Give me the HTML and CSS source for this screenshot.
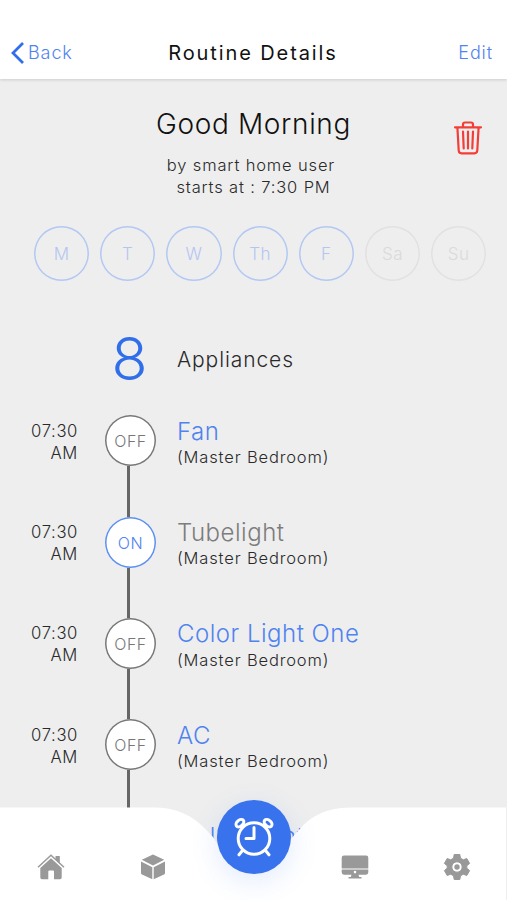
FILE: index.html
```html
<!DOCTYPE html>
<html lang="en">
<head>
  <meta charset="UTF-8" />
  <meta name="viewport" content="width=device-width, initial-scale=1.0"/>
  <title>Routine Details</title>
  <link rel="stylesheet" href="styles.css">
</head>
<body>
  <header>
    <a class="back">
      <svg width="14" height="24" viewBox="0 0 14 24"><path d="M12 2 2 12 12 22"/></svg>
      <span>Back</span>
    </a>
    <h1>Routine Details</h1>
    <a class="edit">Edit</a>
  </header>

  <main>
    <section class="intro">
      <h2>Good Morning</h2>
      <p class="author">by smart home user</p>
      <p class="starts">starts at : 7:30 PM</p>
      <svg class="trash" width="28" height="34" viewBox="0 0 28 34">
        <path d="M1 6.3H27M9 6V3.5Q9 1.5 11 1.5H17Q19 1.5 19 3.5V6M3.4 6.5 4.7 29.5Q4.9 32.3 7.5 32.3H20.5Q23.1 32.3 23.3 29.5L24.6 6.5M9 10.5 9.7 27.5M14 10.5V27.5M19 10.5 18.3 27.5"/>
      </svg>
    </section>

    <div class="days">
      <span class="day">M</span>
      <span class="day">T</span>
      <span class="day">W</span>
      <span class="day">Th</span>
      <span class="day">F</span>
      <span class="day off">Sa</span>
      <span class="day off">Su</span>
    </div>

    <div class="summary">
      <span class="count">8</span>
      <span class="label">Appliances</span>
    </div>

    <ul class="timeline">
      <li>
        <div class="time">07:30<br>AM</div>
        <div class="state">OFF</div>
        <div class="appliance"><h3>Fan</h3><p>(Master Bedroom)</p></div>
      </li>
      <li>
        <div class="time">07:30<br>AM</div>
        <div class="state on">ON</div>
        <div class="appliance"><h3 class="grey">Tubelight</h3><p>(Master Bedroom)</p></div>
      </li>
      <li>
        <div class="time">07:30<br>AM</div>
        <div class="state">OFF</div>
        <div class="appliance"><h3>Color Light One</h3><p>(Master Bedroom)</p></div>
      </li>
      <li>
        <div class="time">07:30<br>AM</div>
        <div class="state">OFF</div>
        <div class="appliance"><h3>AC</h3><p>(Master Bedroom)</p></div>
      </li>
      <li>
        <div class="time">07:30<br>AM</div>
        <div class="state">OFF</div>
        <div class="appliance"><h3>Color Light Two</h3><p>(Master Bedroom)</p></div>
      </li>
    </ul>
  </main>

  <nav>
    <svg class="nav-shape" width="507" height="93" viewBox="0 0 507 93">
      <path d="M0 .5H155C172 .5 187 6 199 16C206 22 209 26 213 30C223 46 236 56 254 56C270 56 281 44 291 32C296 26 302 19 308 14C320 4.5 334 .5 352 .5H506V93H0Z"/>
    </svg>
    <a class="tab">
      <svg width="28" height="26" viewBox="0 0 28 26">
        <path d="M14 4.2 24.7 14V23.5Q24.7 25.3 23 25.3H17V17.5Q17 16.5 16 16.5H12.3Q11.3 16.5 11.3 17.5V25.3H5Q3.3 25.3 3.3 23.5V14Z"/>
        <path d="M18.5 2H22.8V9.5L18.5 5.6Z"/>
        <path class="roof" d="M1 13.2 14 1.3 27 13.2"/>
      </svg>
    </a>
    <a class="tab">
      <svg width="26" height="26" viewBox="0 0 26 26">
        <path d="M13 .5 24.2 5.8 13 11.6 1.8 5.8ZM1 7.6 12.3 13.2V25.3L2 20.6Q1 20 1 19ZM25 7.6 13.7 13.2V25.3L24 20.6Q25 20 25 19Z"/>
      </svg>
    </a>
    <a class="tab alarm">
      <svg width="42" height="40" viewBox="0 0 42 40">
        <circle cx="21" cy="21.5" r="15.8"/>
        <path d="M21 10.5V21.5H13M9.5 33.5 6 37.8M32.5 33.5 36 37.8"/>
        <ellipse cx="6.9" cy="6.2" rx="4.5" ry="3" transform="rotate(-40 6.9 6.2)"/>
        <ellipse cx="35.1" cy="6.2" rx="4.5" ry="3" transform="rotate(40 35.1 6.2)"/>
      </svg>
    </a>
    <a class="tab">
      <svg width="28" height="26" viewBox="0 0 28 26">
        <path d="M3 1.5H25Q27.3 1.5 27.3 3.8V14.4H.7V3.8Q.7 1.5 3 1.5Z"/>
        <path fill-rule="evenodd" d="M.7 15.6H27.3V18.3Q27.3 20.7 25 20.7H17.5L18.2 23H20.5V24.4H7.5V23H9.8L10.5 20.7H3Q.7 20.7 .7 18.3ZM14 16.8A1.3 1.3 0 1 0 14 19.4A1.3 1.3 0 1 0 14 16.8Z"/>
      </svg>
    </a>
    <a class="tab">
      <svg width="28" height="28" viewBox="0 0 28 28">
        <path class="gear" fill-rule="evenodd" d="M11.2 1.5H16.8L17.5 5.2 20.3 6.8 23.8 5.5 26.6 10.4 23.8 12.8V15.2L26.6 17.6 23.8 22.5 20.3 21.2 17.5 22.8 16.8 26.5H11.2L10.5 22.8 7.7 21.2 4.2 22.5 1.4 17.6 4.2 15.2V12.8L1.4 10.4 4.2 5.5 7.7 6.8 10.5 5.2ZM14 8.8A5.2 5.2 0 1 0 14 19.2A5.2 5.2 0 1 0 14 8.8Z"/>
        <circle cx="14" cy="14" r="2.7"/>
      </svg>
    </a>
  </nav>
</body>
</html>
```
FILE: styles.css
```css
* {
  box-sizing: border-box;
}
body {
  margin: 0;
  height: 900px;
  overflow: hidden;
  position: relative;
  background: #eeeeee;
  font-family: Inter, "Liberation Sans", sans-serif;
  font-weight: 300;
  color: #2a2a2a;
}
h1, h2, h3, p, ul {
  margin: 0;
  padding: 0;
  font-weight: 300;
}
header {
  height: 79px;
  padding: 26px 14px 0 11px;
  display: grid;
  grid-template-columns: 1fr auto 1fr;
  align-items: center;
  background: #fff;
  box-shadow: 0 1px 3px rgba(0,0,0,0.14);
}
header h1 {
  font-size: 20px;
  font-weight: 400;
  letter-spacing: 1.9px;
  padding-left: 2px;
  color: #111;
}
.back, .edit {
  font-size: 18px;
  letter-spacing: 0.9px;
  color: #4f83f0;
}
.back {
  display: flex;
  align-items: center;
  gap: 3px;
}
.back svg {
  fill: none;
  stroke: #316fea;
  stroke-width: 2.8;
}
.edit {
  text-align: right;
}
.intro {
  position: relative;
  height: 147px;
  padding-top: 27px;
  text-align: center;
}
.intro h2 {
  font-size: 28px;
  line-height: 36px;
  letter-spacing: 0.65px;
  color: #111;
}
.intro p {
  font-size: 16.5px;
  font-weight: 350;
  line-height: 22px;
  letter-spacing: 0.85px;
}
.intro .author {
  margin-top: 12px;
  padding-right: 5px;
}
.trash {
  position: absolute;
  top: 42px;
  right: 25px;
  fill: none;
  stroke: #f33e38;
  stroke-width: 2.2;
  stroke-linecap: round;
}
.days {
  display: flex;
  gap: 11px;
  padding-left: 34px;
}
.day {
  width: 55.2px;
  height: 55.2px;
  box-shadow: inset 0 0 0 1.5px #b3c8f2;
  border-radius: 50%;
  display: flex;
  flex: none;
  align-items: center;
  justify-content: center;
  font-size: 17px;
  letter-spacing: 0.6px;
  color: #b4c6f0;
}
.day.off {
  box-shadow: inset 0 0 0 1.5px #e1e1e1;
  color: #dadada;
}
.summary {
  display: grid;
  grid-template-columns: 51px 1fr;
  column-gap: 21px;
  align-items: center;
  height: 70px;
  margin: 42.8px 0 0 105px;
}
.count {
  font-size: 59px;
  line-height: 70px;
  text-align: center;
  padding-right: 2px;
  color: #316fea;
}
.label {
  padding-top: 2px;
  font-size: 21px;
  font-weight: 350;
  letter-spacing: 0.9px;
}
.timeline {
  list-style: none;
  margin-top: 21.3px;
}
.timeline li {
  display: grid;
  grid-template-columns: 78px 51px 1fr;
  height: 101.3px;
  background: linear-gradient(#666, #666) 127px 0 / 3px 100% no-repeat;
}
.timeline li:first-child {
  background-position: 127px 20px;
}
.time {
  padding-top: 4.5px;
  text-align: right;
  font-size: 16.7px;
  font-weight: 350;
  line-height: 22px;
  letter-spacing: 0.6px;
}
.state {
  width: 51px;
  height: 51px;
  margin-left: 27px;
  padding-top: 1px;
  box-shadow: inset 0 0 0 1.5px #777;
  border-radius: 50%;
  background: #fff;
  display: flex;
  align-items: center;
  justify-content: center;
  font-size: 16px;
  letter-spacing: 0.5px;
  color: #777;
}
.state.on {
  box-shadow: inset 0 0 0 1.5px #5c8ff2;
  color: #4f83f0;
}
.appliance {
  padding: 0.5px 0 0 48px;
}
.appliance h3 {
  font-size: 24px;
  line-height: 32px;
  letter-spacing: 0.5px;
  color: #4f83f0;
}
.appliance h3.grey {
  color: #7c7c7c;
}
.appliance p {
  margin-top: -0.8px;
  font-size: 16.5px;
  font-weight: 350;
  line-height: 20px;
  letter-spacing: 0.85px;
}
nav {
  position: absolute;
  left: 0;
  right: 0;
  bottom: 0;
  height: 93px;
  display: grid;
  grid-template-columns: repeat(5, 1fr);
}
.nav-shape {
  position: absolute;
  left: 0;
  top: 0;
  fill: #fff;
}
.tab {
  position: relative;
  display: flex;
  align-items: center;
  justify-content: center;
  padding: 26px 0 0 1px;
  fill: #999;
}
.roof {
  fill: none;
  stroke: #999;
  stroke-width: 1.5;
}
.gear {
  stroke: #999;
  stroke-width: 1;
  stroke-linejoin: round;
}
.alarm {
  width: 74px;
  height: 74px;
  margin: -7px 0 0 1px;
  padding: 0;
  justify-self: center;
  border-radius: 50%;
  background: #3873ed;
  box-shadow: 0 7px 28px rgba(56,115,237,0.15);
}
.alarm svg {
  fill: none;
  stroke: #fff;
  stroke-width: 3;
  stroke-linecap: round;
  stroke-linejoin: round;
}
```
